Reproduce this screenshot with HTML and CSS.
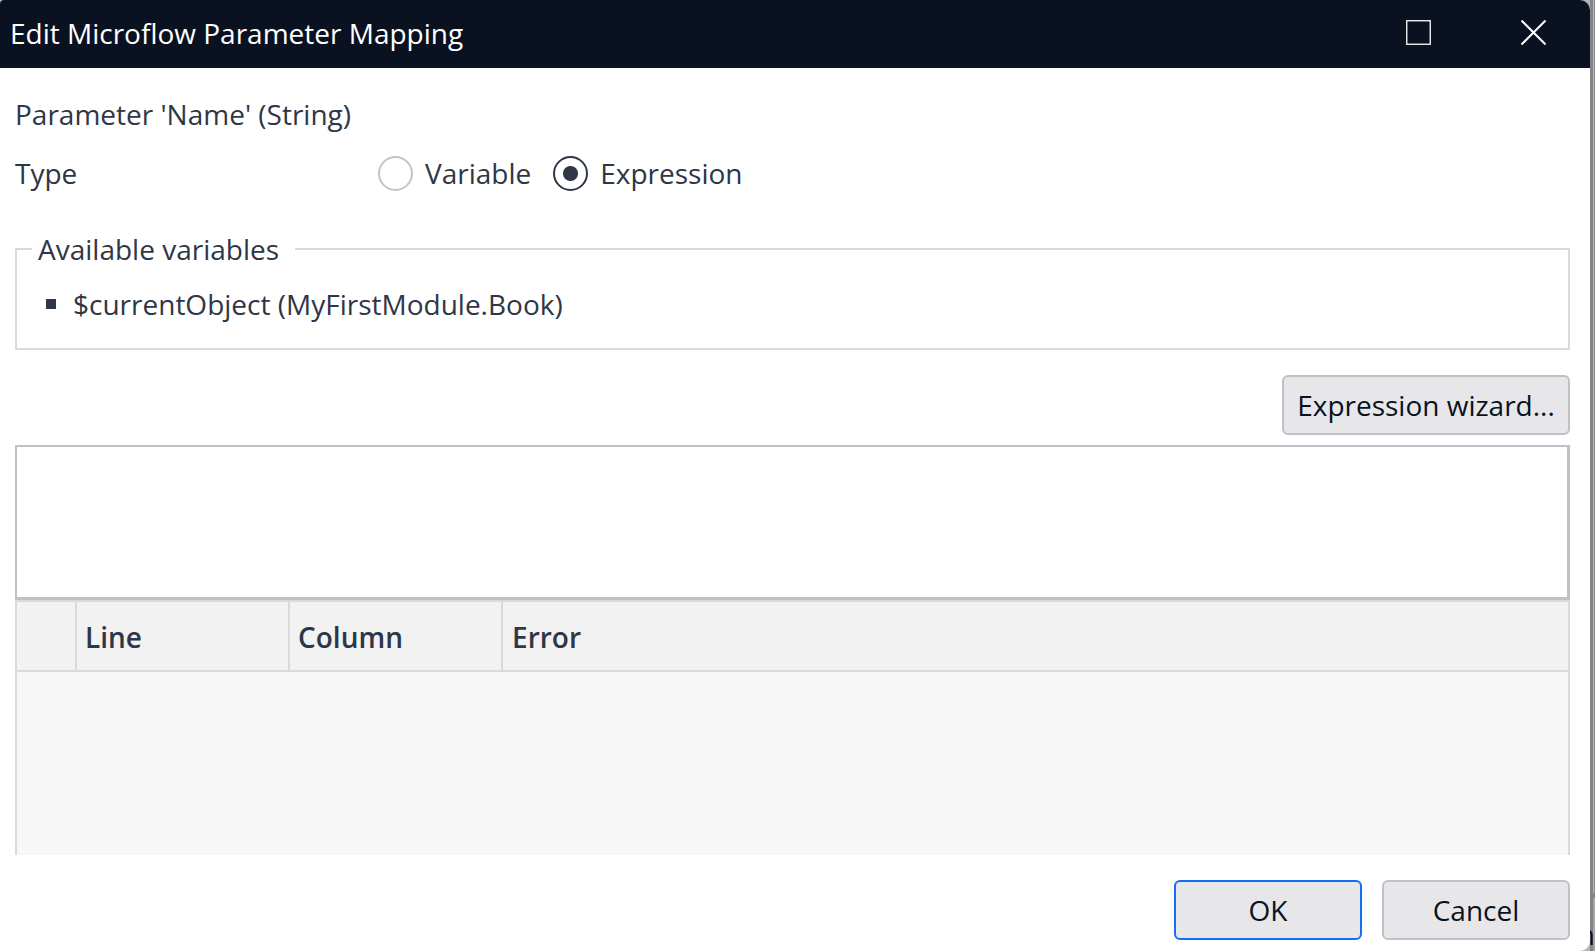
FILE: index.html
```html
<!DOCTYPE html>
<html lang="en">
<head>
<meta charset="utf-8">
<title>Edit Microflow Parameter Mapping</title>
<link rel="stylesheet" href="styles.css">
</head>
<body>
<div class="desktop">
  <form class="dialog" role="dialog" aria-labelledby="title">
    <header class="titlebar">
      <h1 class="title" id="title">Edit Microflow Parameter Mapping</h1>
      <button class="window-button" type="button" aria-label="Maximize">
        <svg width="25" height="25" viewBox="0 0 25 25"><rect x="0.75" y="0.75" width="23.5" height="23.5" fill="none" stroke="#fff" stroke-width="1.3"/></svg>
      </button>
      <button class="window-button" type="button" aria-label="Close">
        <svg width="25" height="25" viewBox="0 0 25 25"><path d="M0.5 0.5L24.5 24.5M24.5 0.5L0.5 24.5" fill="none" stroke="#fff" stroke-width="2"/></svg>
      </button>
    </header>
    <div class="content">
      <p class="parameter">Parameter 'Name' (String)</p>
      <div class="type-row" role="radiogroup" aria-labelledby="type-label">
        <span class="type-label" id="type-label">Type</span>
        <label class="option"><input class="radio" type="radio" name="type">Variable</label>
        <label class="option"><input class="radio" type="radio" name="type" checked>Expression</label>
      </div>
      <fieldset class="variables">
        <legend class="legend">Available variables</legend>
        <ul class="variable-list">
          <li class="variable">$currentObject (MyFirstModule.Book)</li>
        </ul>
      </fieldset>
      <div class="wizard-row">
        <button class="button button-wizard" type="button">Expression wizard...</button>
      </div>
      <textarea class="editor" aria-label="Expression"></textarea>
      <div class="errors">
        <table class="error-table">
          <thead>
            <tr>
              <th class="cell cell-icon"></th>
              <th class="cell cell-number">Line</th>
              <th class="cell cell-number">Column</th>
              <th class="cell">Error</th>
            </tr>
          </thead>
        </table>
      </div>
      <footer class="actions">
        <button class="button button-action button-default" type="submit">OK</button>
        <button class="button button-action" type="button">Cancel</button>
      </footer>
    </div>
  </form>
  <div class="behind"><div class="behind-upper"></div><div class="behind-lower">n</div></div>
</div>
</body>
</html>
```
FILE: styles.css
```css
* { box-sizing: border-box; }

body {
  margin: 0;
  font-family: "Open Sans", "Noto Sans", sans-serif;
  font-size: 28px;
  line-height: 40px;
  color: #2f3646;
}

.desktop {
  display: flex;
  min-height: 100vh;
  background: #b4b4b4;
}

.dialog {
  flex: 1;
  display: flex;
  flex-direction: column;
  background: #fff;
  border-radius: 4px 10px 10px 0;
  overflow: hidden;
}

.titlebar {
  display: flex;
  align-items: center;
  height: 68px;
  padding: 0 11px 3px 10px;
  background: #0a1222;
  color: #fff;
}

.title {
  flex: 1;
  margin: 0;
  font-size: 28px;
  font-weight: 400;
  line-height: 40px;
}

.window-button {
  display: flex;
  align-items: center;
  justify-content: center;
  width: 92px;
  height: 65px;
  margin-left: 23px;
  padding: 0;
  border: 0;
  background: none;
}

.content {
  flex: 1;
  display: flex;
  flex-direction: column;
  padding: 26px 20px 11px 15px;
}

.parameter { margin: 0 0 19px; }

.type-row {
  display: flex;
  align-items: center;
  height: 40px;
}

.type-label { width: 363px; }

.option {
  display: flex;
  align-items: center;
  gap: 12px;
  margin-right: 22px;
}

.radio {
  appearance: none;
  width: 35px;
  height: 35px;
  margin: 0;
  border: 2px solid #c4c3ca;
  border-radius: 50%;
}

.radio:checked {
  border-color: #2f3646;
  background: radial-gradient(circle, #2f3646 7px, #fff 8px);
}

.variables {
  margin: 36px 0 25px;
  padding: 15px 10px 24px 15px;
  border: 2px solid #dadadb;
}

.legend {
  padding: 0 16px 0 6px;
}

.variable-list {
  margin: 0;
  padding: 0 0 0 14px;
  list-style: none;
}

.variable {
  display: flex;
  align-items: center;
  gap: 17px;
}

.variable::before {
  content: "";
  width: 10px;
  height: 10px;
  background: #2f3646;
}

.wizard-row {
  display: flex;
  justify-content: flex-end;
  margin-bottom: 10px;
}

.button {
  height: 60px;
  padding: 0 13px;
  border: 2px solid #c1c0c8;
  border-radius: 6px;
  background: #e7e7e9;
  color: #0a1222;
  font: inherit;
}

.button-wizard { min-width: 288px; }
.button-action { width: 188px; }
.button-default { border-color: #146ff4; }

.editor {
  display: block;
  width: 100%;
  height: 155px;
  padding: 8px;
  border: solid #c1c0c8;
  border-width: 2px 3px 3px 2px;
  background: #fff;
  font: inherit;
  resize: none;
}

.errors {
  flex: 1;
  min-height: 72px;
  border: solid #dadadb;
  border-width: 2px 2px 0;
  background: #f7f7f7;
}

.error-table {
  width: 100%;
  table-layout: fixed;
  border-spacing: 0;
}

.cell {
  height: 70px;
  padding: 2px 8px 0;
  border: solid #dadadb;
  border-width: 0 2px 2px 0;
  background: #f2f2f2;
  font-weight: 600;
  text-align: left;
}

.cell:last-child { border-right: 0; padding-left: 9px; }
.cell-icon { width: 60px; }
.cell-number { width: 213px; }

.actions {
  display: flex;
  justify-content: flex-end;
  gap: 20px;
  margin-top: 25px;
}

.behind {
  display: flex;
  flex-direction: column;
  width: 5px;
  overflow: hidden;
  background: linear-gradient(to right, #858585 3px, #b4b4b4 3px, #b4b4b4 4px, #8c8c93 4px);
}

.behind-upper { flex: 1; }

.behind-lower {
  display: flex;
  justify-content: flex-end;
  height: 58px;
  border-top: 5px solid #858585;
  background: linear-gradient(to right, #858585 3px, #a5a5a5 3px);
  color: #0a1222;
  line-height: 72px;
}
```
